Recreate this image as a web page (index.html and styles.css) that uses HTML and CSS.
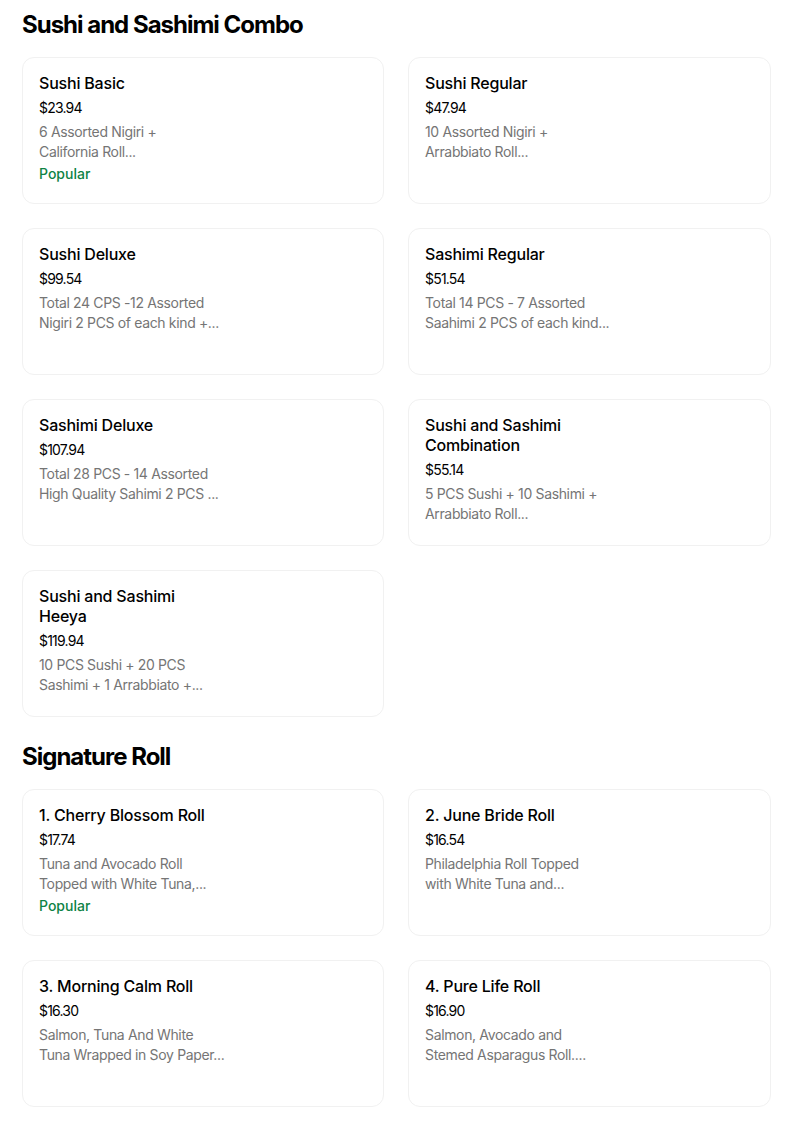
FILE: index.html
```html
<!DOCTYPE html>
<html lang="en">
<head>
<meta charset="utf-8">
<title>Menu</title>
<link rel="stylesheet" href="styles.css">
</head>
<body>
<main class="menu">
  <section class="section">
    <h2 class="section-title">Sushi and Sashimi Combo</h2>
    <div class="grid">
      <article class="card">
        <div class="info">
          <h3 class="name">Sushi Basic</h3>
          <div class="price">$23.94</div>
          <p class="desc">6 Assorted Nigiri +<br>California Roll...</p>
          <div class="badge">Popular</div>
        </div>
      </article>
      <article class="card">
        <div class="info">
          <h3 class="name">Sushi Regular</h3>
          <div class="price">$47.94</div>
          <p class="desc">10 Assorted Nigiri +<br>Arrabbiato Roll...</p>
        </div>
      </article>
      <article class="card">
        <div class="info">
          <h3 class="name">Sushi Deluxe</h3>
          <div class="price">$99.54</div>
          <p class="desc">Total 24 CPS -12 Assorted<br>Nigiri 2 PCS of each kind +...</p>
        </div>
      </article>
      <article class="card">
        <div class="info">
          <h3 class="name">Sashimi Regular</h3>
          <div class="price">$51.54</div>
          <p class="desc">Total 14 PCS - 7 Assorted<br>Saahimi 2 PCS of each kind...</p>
        </div>
      </article>
      <article class="card">
        <div class="info">
          <h3 class="name">Sashimi Deluxe</h3>
          <div class="price">$107.94</div>
          <p class="desc">Total 28 PCS - 14 Assorted<br>High Quality Sahimi 2 PCS ...</p>
        </div>
      </article>
      <article class="card">
        <div class="info">
          <h3 class="name">Sushi and Sashimi<br>Combination</h3>
          <div class="price">$55.14</div>
          <p class="desc">5 PCS Sushi + 10 Sashimi +<br>Arrabbiato Roll...</p>
        </div>
      </article>
      <article class="card">
        <div class="info">
          <h3 class="name">Sushi and Sashimi<br>Heeya</h3>
          <div class="price">$119.94</div>
          <p class="desc">10 PCS Sushi + 20 PCS<br>Sashimi + 1 Arrabbiato +...</p>
        </div>
      </article>
    </div>
  </section>
  <section class="section">
    <h2 class="section-title">Signature Roll</h2>
    <div class="grid">
      <article class="card">
        <div class="info">
          <h3 class="name">1. Cherry Blossom Roll</h3>
          <div class="price">$17.74</div>
          <p class="desc">Tuna and Avocado Roll<br>Topped with White Tuna,...</p>
          <div class="badge">Popular</div>
        </div>
      </article>
      <article class="card">
        <div class="info">
          <h3 class="name">2. June Bride Roll</h3>
          <div class="price">$16.54</div>
          <p class="desc">Philadelphia Roll Topped<br>with White Tuna and...</p>
        </div>
      </article>
      <article class="card">
        <div class="info">
          <h3 class="name">3. Morning Calm Roll</h3>
          <div class="price">$16.30</div>
          <p class="desc">Salmon, Tuna And White<br>Tuna Wrapped in Soy Paper...</p>
        </div>
      </article>
      <article class="card">
        <div class="info">
          <h3 class="name">4. Pure Life Roll</h3>
          <div class="price">$16.90</div>
          <p class="desc">Salmon, Avocado and<br>Stemed Asparagus Roll....</p>
        </div>
      </article>
    </div>
  </section>
</main>
</body>
</html>
```

FILE: styles.css
```css
* { box-sizing: border-box; }
html, body { margin: 0; padding: 0; background: #fff; }
body {
  font-family: Inter, "Noto Sans", "Liberation Sans", sans-serif;
  color: #000;
}
.menu {
  width: 749px;
  margin-left: 22px;
  padding-top: 9px;
  display: flex;
  flex-direction: column;
  gap: 24px;
}
.section-title {
  margin: 0 0 16px;
  font-size: 24px;
  line-height: 32px;
  font-weight: 700;
  letter-spacing: -1px;
}
.grid {
  display: grid;
  grid-template-columns: 362px 363px;
  column-gap: 24px;
  row-gap: 24px;
}
.card {
  height: 147px;
  border: 1px solid #f1f1f1;
  border-radius: 12px;
  padding: 15px 16px;
  overflow: hidden;
}
.info { width: 220px; }
.name {
  margin: 0;
  font-size: 16px;
  line-height: 20px;
  font-weight: 500;
  letter-spacing: -0.2px;
  white-space: nowrap;
}
.price {
  margin-top: 5px;
  font-size: 14px;
  line-height: 20px;
  font-weight: 400;
  letter-spacing: -0.8px;
}
.desc {
  margin: 4px 0 0;
  font-size: 14px;
  line-height: 20px;
  color: #757575;
  letter-spacing: -0.35px;
  white-space: nowrap;
}
.badge {
  margin-top: 2px;
  font-size: 14px;
  line-height: 20px;
  font-weight: 500;
  color: #0e8345;
}
```
